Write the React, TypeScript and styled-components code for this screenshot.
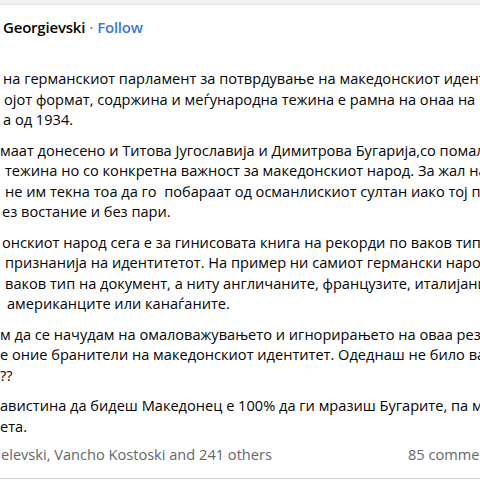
import React from "react";
import styled, { createGlobalStyle } from "styled-components";

const GlobalStyle = createGlobalStyle`
  html, body {
    margin: 0;
    padding: 0;
    background: #ffffff;
    overflow: hidden;
  }
  body {
    font-family: "Open Sans", "Noto Sans", Arial, sans-serif;
    color: #050505;
  }
`;

const paragraphs: { text: string; lead?: number }[][] = [
  [
    { text: "на германскиот парламент за потврдување на македонскиот идентитет", lead: 3 },
    { text: "ојот формат, содржина и меѓународна тежина е рамна на онаа на", lead: 4 },
    { text: "а од 1934.", lead: 3 },
  ],
  [
    { text: "маат донесено и Титова Југославија и Димитрова Бугарија,со помала", lead: 0 },
    { text: "тежина но со конкретна важност за македонскиот народ. За жал на", lead: 5 },
    { text: "не им текна тоа да го  побараат од османлискиот султан иако тој п", lead: 5 },
    { text: "ез востание и без пари.", lead: 2 },
  ],
  [
    { text: "онскиот народ сега е за гинисовата книга на рекорди по ваков тип", lead: 2 },
    { text: "признанија на идентитетот. На пример ни самиот германски народ", lead: 5 },
    { text: "ваков тип на документ, а ниту англичаните, французите, италијанците", lead: 5 },
    { text: "американците или канаѓаните.", lead: 7 },
  ],
  [
    { text: "м да се начудам на омаловажувањето и игнорирањето на оваа резолуција", lead: 0 },
    { text: "е оние бранители на македонскиот идентитет. Одеднаш не било ваков", lead: 0 },
    { text: "??", lead: 0 },
  ],
  [
    { text: "авистина да бидеш Македонец е 100% да ги мразиш Бугарите, па макар", lead: 0 },
    { text: "ета.", lead: 0 },
  ],
];

export default function App() {
  return (
    <Page>
      <GlobalStyle />
      <TopBar />
      <Header>
        <Name>Georgievski</Name>
        <Dot>·</Dot>
        <Follow>Follow</Follow>
      </Header>
      <Body>
        {paragraphs.map((lines, i) => (
          <Paragraph key={i}>
            {lines.map((l, j) => (
              <Line key={j} $lead={l.lead ?? 0}>
                {l.text}
              </Line>
            ))}
          </Paragraph>
        ))}
      </Body>
      <Footer>
        <Reactions>elevski, Vancho Kostoski and 241 others</Reactions>
        <Counts>85 comments</Counts>
      </Footer>
      <Divider />
    </Page>
  );
}

const Page = styled.div`
  width: 480px;
  height: 480px;
  overflow: hidden;
  display: flex;
  flex-direction: column;
`;

const TopBar = styled.div`
  height: 4px;
  background: #f0f2f5;
  border-bottom: 1px solid #e6e8ec;
  flex-shrink: 0;
`;

const Header = styled.div`
  display: flex;
  align-items: center;
  gap: 4px;
  padding: 12px 0 0 3px;
  height: 20px;
  font-size: 15px;
  font-weight: 600;
  white-space: nowrap;
`;

const Name = styled.span`
  color: #050505;
  letter-spacing: -0.2px;
`;

const Dot = styled.span`
  color: #65676b;
  font-weight: 400;
`;

const Follow = styled.span`
  color: #3b78e0;
  letter-spacing: -0.2px;
`;

const Body = styled.div`
  display: flex;
  flex-direction: column;
  gap: 10px;
  margin-top: 31px;
  font-size: 14.6px;
  line-height: 20.5px;
`;

const Paragraph = styled.div`
  display: flex;
  flex-direction: column;
`;

const Line = styled.div<{ $lead: number }>`
  white-space: pre;
  padding-left: ${(p) => p.$lead}px;
`;

const Footer = styled.div`
  display: flex;
  align-items: center;
  justify-content: space-between;
  margin-top: 8px;
  height: 20px;
  font-size: 14.6px;
  color: #65676b;
  white-space: nowrap;
`;

const Reactions = styled.span`
  padding-left: 1px;
`;

const Counts = styled.span`
  width: 72px;
  overflow: visible;
`;

const Divider = styled.div`
  margin-top: 14px;
  height: 1px;
  background: #ced0d4;
`;
